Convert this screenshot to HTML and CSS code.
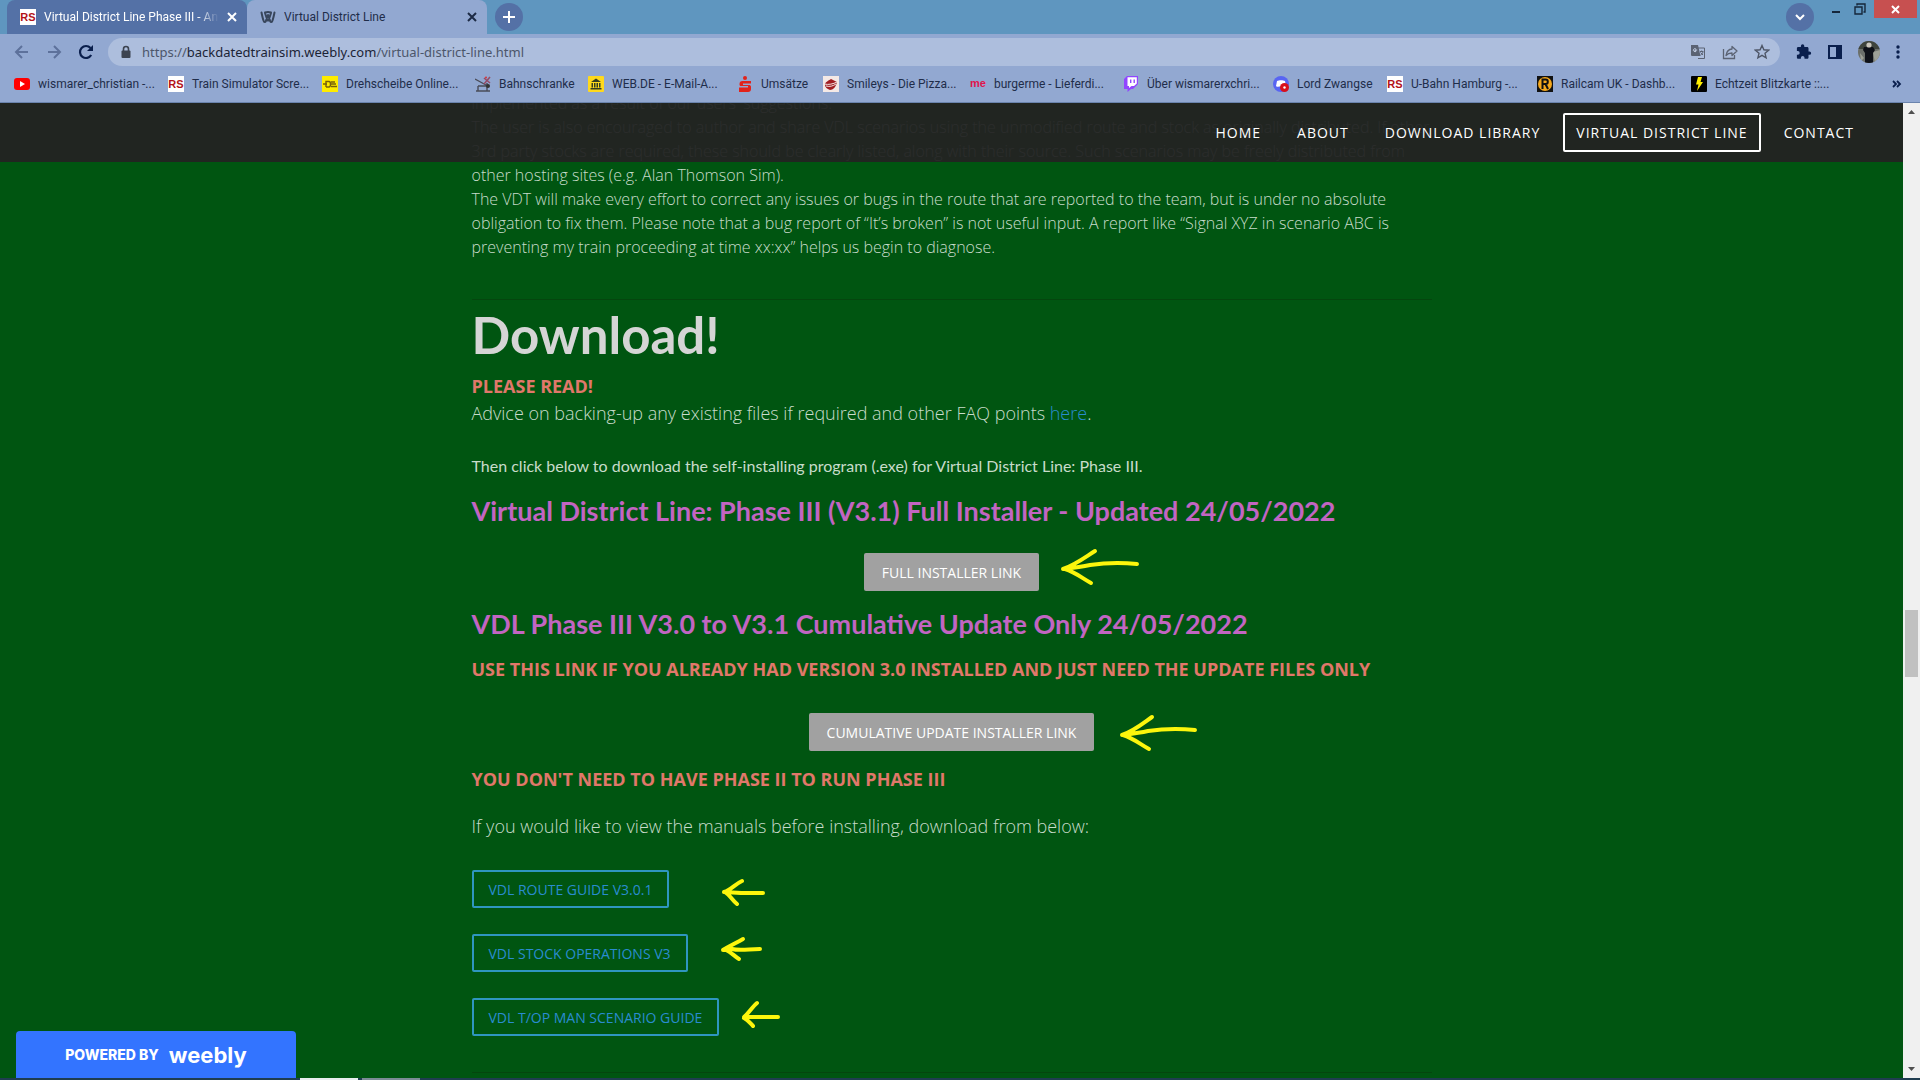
FILE: index.html
```html
<!DOCTYPE html>
<html lang="en">
<head>
<meta charset="utf-8">
<title>Virtual District Line</title>
<link rel="stylesheet" href="styles.css">
</head>
<body>
<div class="browser">
  <header class="chrome">
    <div class="tabs">
      <div class="tab tab-dark">
        <svg class="icon16" viewBox="0 0 16 16"><rect width="16" height="16" fill="#fff"/><text x="8" y="12" class="rs">RS</text></svg>
        <span class="tab-title fade">Virtual District Line Phase III - An</span>
        <button class="plain" aria-label="Close tab"><svg width="10" height="10" viewBox="0 0 10 10"><path d="M1 1l8 8M9 1l-8 8" stroke="#fff" stroke-width="2"/></svg></button>
      </div>
      <div class="tab tab-light">
        <svg class="icon16" viewBox="0 0 16 16"><path d="M1.500 3.500c.6 3 1.300 6.500 2.300 8.700.5 1 1.500 1 2 0L8 6l2.200 6.200c.5 1 1.500 1 2 0 1-2.200 1.700-5.700 2.300-8.700M5 4l2.500 7.500M11 4L8.500 11.500M5 3.500c2-.8 4-.8 6 0" fill="none" stroke="#38465c" stroke-width="2" stroke-linecap="round" stroke-linejoin="round"/></svg>
        <span class="tab-title">Virtual District Line</span>
        <button class="plain" aria-label="Close tab"><svg width="10" height="10" viewBox="0 0 10 10"><path d="M1 1l8 8M9 1l-8 8" stroke="#1d2b45" stroke-width="2"/></svg></button>
      </div>
      <button class="round new-tab" aria-label="New tab"><svg width="14" height="14" viewBox="0 0 14 14"><path d="M7 1v12M1 7h12" stroke="#fff" stroke-width="2"/></svg></button>
      <div class="window-tools">
        <button class="round" aria-label="Search tabs"><svg width="12" height="12" viewBox="0 0 12 12"><path d="M2 4l4 4 4-4" fill="none" stroke="#fff" stroke-width="2"/></svg></button>
        <button class="win" aria-label="Minimize"><svg width="10" height="10" viewBox="0 0 10 10"><path d="M1 8h8" stroke="#15263a" stroke-width="2"/></svg></button>
        <button class="win" aria-label="Restore"><svg width="12" height="12" viewBox="0 0 12 12"><path d="M3 2.500V1h8v8H9.500M1 4h7v7H1z" fill="none" stroke="#15263a" stroke-width="1.400"/></svg></button>
        <button class="win win-close" aria-label="Close"><svg width="9" height="9" viewBox="0 0 9 9"><path d="M1 1l7 7M8 1L1 8" stroke="#fff" stroke-width="2"/></svg></button>
      </div>
    </div>
    <div class="toolbar">
      <button class="plain" aria-label="Back"><svg width="16" height="16" viewBox="0 0 16 16"><path d="M14 8H3M8 2L2 8l6 6" fill="none" stroke="#5d719b" stroke-width="2"/></svg></button>
      <button class="plain" aria-label="Forward"><svg width="16" height="16" viewBox="0 0 16 16"><path d="M2 8h11M8 2l6 6-6 6" fill="none" stroke="#5d719b" stroke-width="2"/></svg></button>
      <button class="plain" aria-label="Reload"><svg width="16" height="16" viewBox="0 0 16 16"><path d="M13.200 11A6 6 0 1 1 12.500 4" fill="none" stroke="#0a1f4d" stroke-width="2.200"/><path d="M15 1v6H9z" fill="#0a1f4d"/></svg></button>
      <div class="omnibox">
        <svg width="12" height="14" viewBox="0 0 12 14"><path d="M3.500 6V4a2.500 2.500 0 0 1 5 0v2" fill="none" stroke="#3c4350" stroke-width="1.600"/><rect x="1.500" y="5.500" width="9" height="7.500" rx="1" fill="#3c4350"/></svg>
        <span class="url">https://<b>backdatedtrainsim.weebly.com</b>/virtual-district-line.html</span>
        <svg width="16" height="16" viewBox="0 0 16 16"><path d="M7.500 4H14.500v10.500H8" fill="none" stroke="#5b6373"/><path d="M1 1h7l2.500 11H2a1 1 0 0 1-1-1z" fill="#5b6373"/><path d="M7.200 6H5v1h1.200A1.500 1.500 0 1 1 5.900 5" fill="none" stroke="#c5d0e6"/><path d="M10 7.500h3.500M11.700 6.500v1M13 8c-.5 1.500-1.500 2.500-2.500 3M10.500 8.500L13 11" fill="none" stroke="#5b6373"/></svg>
        <svg width="16" height="16" viewBox="0 0 16 16"><path d="M1.500 5v9.500h11V11" fill="none" stroke="#5b6373" stroke-width="1.300"/><path d="M10 2.500L15 7l-5 4.500V9C7.500 9 5.500 9.700 4 11.500 4.500 8 6.500 5.300 10 5z" fill="none" stroke="#5b6373" stroke-width="1.300" stroke-linejoin="round"/></svg>
        <svg width="16" height="16" viewBox="0 0 16 16"><path d="M8 1.500l1.900 4.300 4.700.4-3.600 3.100 1.100 4.600L8 11.400l-4.100 2.500L5 9.300 1.400 6.200l4.700-.4z" fill="none" stroke="#4e5667" stroke-width="1.400"/></svg>
      </div>
      <div class="tools">
        <button class="plain" aria-label="Extensions"><svg width="16" height="16" viewBox="0 0 16 16"><path d="M13.500 7.500h-1V4.400c0-.7-.6-1.300-1.300-1.300H8.300V2a1.700 1.700 0 0 0-3.400 0v1.100H2.200c-.7 0-1.300.6-1.300 1.300v2.700h1a1.800 1.800 0 0 1 0 3.600h-1v2.800c0 .7.600 1.300 1.300 1.300h2.700v-1a1.800 1.800 0 0 1 3.600 0v1h2.700c.7 0 1.300-.6 1.300-1.300v-2.700h1a1.650 1.650 0 0 0 0-3.300z" fill="#0a1f4d"/></svg></button>
        <button class="plain" aria-label="Side panel"><svg width="14" height="14" viewBox="0 0 14 14"><rect x="1" y="1" width="12" height="12" fill="none" stroke="#0a1f4d" stroke-width="2"/><path d="M8 1h5v12H8z" fill="#0a1f4d"/></svg></button>
        <button class="plain" aria-label="Profile"><svg width="22" height="22" viewBox="0 0 22 22"><clipPath id="c"><circle cx="11" cy="11" r="11"/></clipPath><g clip-path="url(#c)"><path fill="#6c706b" d="M0 0h22v22H0z"/><path fill="#3e443d" d="M0 0h22v8H0z"/><path fill="#9da097" d="M15 11l7-2v9l-5 4zM2 12l4 5-3 3z"/><path fill="#0e1118" d="M6 6h9l2 3-2 3v10H7V12L5 9z"/><circle cx="11" cy="4" r="2.600" fill="#c9c5bb"/></g></svg></button>
        <button class="plain" aria-label="Menu"><svg width="4" height="14" viewBox="0 0 4 14"><g fill="#0a1f4d"><circle cx="2" cy="2" r="1.700"/><circle cx="2" cy="7" r="1.700"/><circle cx="2" cy="12" r="1.700"/></g></svg></button>
      </div>
    </div>
    <nav class="bookmarks" aria-label="Bookmarks">
      <a href="#"><svg class="icon16" viewBox="0 0 16 16"><rect y="2" width="16" height="12" rx="3" fill="#f00"/><path d="M6 5l5 3-5 3z" fill="#fff"/></svg>wismarer_christian -...</a>
      <a href="#"><svg class="icon16" viewBox="0 0 16 16"><rect width="16" height="16" fill="#fff"/><text x="8" y="12" class="rs">RS</text></svg>Train Simulator Scre...</a>
      <a href="#"><svg class="icon16" viewBox="0 0 16 16"><rect width="16" height="16" fill="#ffec00"/><path d="M1 8h4M4 11V5.500h3c2 0 2 5.500 0 5.500H4M9 6h4M9 8h5M9 10.500h6" stroke="#77600b" fill="none" stroke-width="1.400"/></svg>Drehscheibe Online...</a>
      <a href="#"><svg class="icon16" viewBox="0 0 16 16"><path d="M0 3l11 6M3 10h9M1 15h14M3 10v5M12 7v8" stroke="#4a4c58" fill="none" stroke-width="1.400"/><path d="M9 2l6 5M15 1L9 8" stroke="#934c68" stroke-width="1.600"/><circle cx="11" cy="1.500" r="1" fill="#d33"/><circle cx="13" cy="10" r="2" fill="#333"/></svg>Bahnschranke</a>
      <a href="#"><svg class="icon16" viewBox="0 0 16 16"><rect width="16" height="16" rx="1" fill="#ffd91c"/><path d="M8 2.500L13 6H3zM2.500 12h11v1.500h-11zM3.500 7h1.500v4.500H3.500zM6 7h1.500v4.500H6zM8.500 7H10v4.500H8.500zM11 7h1.500v4.500H11z" fill="#333c22"/></svg>WEB.DE - E-Mail-A...</a>
      <a href="#"><svg class="icon16" viewBox="0 0 16 16"><circle cx="8" cy="2" r="2" fill="#e2231a"/><path d="M14 5H5.500a3 3 0 0 0-3 3v.5c0 1 .7 1.500 1.500 1.500h7v1.500H2V16h9a3 3 0 0 0 3-3v-2c0-1.500-1-2-2-2H6V7.500h8z" fill="#e2231a"/></svg>Umsätze</a>
      <a href="#"><svg class="icon16" viewBox="0 0 16 16"><rect width="16" height="16" fill="#f4e9e6"/><path d="M2 9c0-3 3-4 6-6 2 1 4 2 6 3-1 5-4 8-7 8-3-1-5-3-5-5z" fill="#a11d22"/><path d="M1 8c5 1 9 0 13-2M3 10c4 1 7 0 10-2" stroke="#f4e9e6" fill="none"/></svg>Smileys - Die Pizza...</a>
      <a href="#"><svg class="icon16" viewBox="0 0 16 16"><text x="8" y="11" class="me">me</text></svg>burgerme - Lieferdi...</a>
      <a href="#"><svg class="icon16" viewBox="0 0 16 16"><path d="M4 0L1 3v10h3.500v3L8 13h2l5-5V0z" fill="#9146ff"/><path d="M4.500 1.200h9.300v6.300L11 10H8.500L6 12v-2H4.500z" fill="#fff"/><path d="M7 3.500h1.400v3.500H7zM10.500 3.500h1.400v3.500h-1.400z" fill="#9146ff"/></svg>Über wismarerxchri...</a>
      <a href="#"><svg class="icon16" viewBox="0 0 16 16"><circle cx="8" cy="8" r="8" fill="#5865f2"/><path d="M4 5c2-1 6-1 8 0l1 5c-1 1-2 1-3 .500H6C5 11 4 11 3 10z" fill="#fff"/><circle cx="11.500" cy="11.500" r="4.500" fill="#d8101c"/><circle cx="11.500" cy="11.500" r="1.200" fill="#fff"/></svg>Lord Zwangse</a>
      <a href="#"><svg class="icon16" viewBox="0 0 16 16"><rect width="16" height="16" fill="#fff"/><text x="8" y="12" class="rs">RS</text></svg>U-Bahn Hamburg -...</a>
      <a href="#"><svg class="icon16" viewBox="0 0 16 16"><rect width="16" height="16" fill="#111"/><circle cx="8" cy="8" r="7" fill="#f5a81c"/><path d="M5.500 13V3.500h3.200c2.800 0 2.800 4.500 0 4.500H5.500M8.500 8l2.500 5" fill="none" stroke="#111" stroke-width="2"/></svg>Railcam UK - Dashb...</a>
      <a href="#"><svg class="icon16" viewBox="0 0 16 16"><rect width="16" height="16" rx="1" fill="#000"/><path d="M7 1h4L9.500 6H12l-6 9 1.500-6.500H5z" fill="#ffee00"/></svg>Echtzeit Blitzkarte ::...</a>
      <button class="plain more" aria-label="More bookmarks"><svg width="10" height="8" viewBox="0 0 10 8"><path d="M1 1l3 3-3 3M5 1l3 3-3 3" fill="none" stroke="#0a1f4d" stroke-width="1.800"/></svg></button>
    </nav>
  </header>

  <div class="view">
    <div class="page">
      <nav class="site-nav" aria-label="Site">
        <a href="#">HOME</a>
        <a href="#">ABOUT</a>
        <a href="#">DOWNLOAD LIBRARY</a>
        <a href="#" class="current">VIRTUAL DISTRICT LINE</a>
        <a href="#">CONTACT</a>
      </nav>
      <main class="content">
        <p class="terms">implemented as a result of our users' suggestions.<br>
          The user is also encouraged to author and share VDL scenarios using the unmodified route and stock as originally distributed. If other<br>
          3rd party stocks are required, these should be clearly listed, along with their source. Such scenarios may be freely distributed from<br>
          other hosting sites (e.g. Alan Thomson Sim).<br>
          The VDT will make every effort to correct any issues or bugs in the route that are reported to the team, but is under no absolute<br>
          obligation to fix them. Please note that a bug report of “It’s broken” is not useful input. A report like “Signal XYZ in scenario ABC is<br>
          preventing my train proceeding at time xx:xx” helps us begin to diagnose.</p>
        <hr>
        <h1>Download!</h1>
        <p class="lead"><strong>PLEASE READ!</strong><br>Advice on backing-up any existing files if required and other FAQ points <a href="#">here</a>.</p>
        <p class="note">Then click below to download the self-installing program (.exe) for Virtual District Line: Phase III.</p>
        <h2>Virtual District Line: Phase III (V3.1) Full Installer - Updated 24/05/2022</h2>
        <div class="center full"><button class="solid">FULL INSTALLER LINK</button></div>
        <h2>VDL Phase III V3.0 to V3.1 Cumulative Update Only 24/05/2022</h2>
        <p class="lead after"><strong>USE THIS LINK IF YOU ALREADY HAD VERSION 3.0 INSTALLED AND JUST NEED THE UPDATE FILES ONLY</strong></p>
        <div class="center update"><button class="solid">CUMULATIVE UPDATE INSTALLER LINK</button></div>
        <p class="lead after"><strong>YOU DON'T NEED TO HAVE PHASE II TO RUN PHASE III</strong></p>
        <p class="lead manuals">If you would like to view the manuals before installing, download from below:</p>
        <div class="guides">
          <button class="outline">VDL ROUTE GUIDE V3.0.1</button>
          <button class="outline">VDL STOCK OPERATIONS V3</button>
          <button class="outline">VDL T/OP MAN SCENARIO GUIDE</button>
        </div>
        <hr>
        <svg class="arrows" width="960" height="987" viewBox="472 91 960 987">
          <path d="M1137 564c-18-2-34-1-47 1-9 2-18 3-27 4 12-4 21-11 32-18M1065 569c10 3 17 9 26 14"/>
          <path d="M1195 730c-18-2-34-1-47 1-9 2-18 3-26 4 12-4 20-11 30-18M1123 735c10 3 17 9 26 14"/>
          <path d="M763 893h-22c-6-1-11 0-17-1 7-2 11-8 18-11M725 892c5 3 7 8 12 12"/>
          <path d="M760 949c-11 0-20 2-28 0-3 0-6 1-9 1 6-4 13-7 20-11M726 950c5 2 8 6 13 9"/>
          <path d="M778 1017h-34c5-4 8-10 13-14M744 1018c4 2 6 5 9 8"/>
        </svg>
      </main>
      <a class="badge" href="#">POWERED BY <span>weebly</span></a>
    </div>
    <div class="scrollbar">
      <svg width="17" height="17" viewBox="0 0 17 17"><path d="M5 11l3.500-4 3.500 4z" fill="#4f4f4f"/></svg>
      <div class="thumb"></div>
      <svg width="17" height="17" viewBox="0 0 17 17"><path d="M5 6l3.500 4L12 6z" fill="#4f4f4f"/></svg>
    </div>
  </div>
  <footer class="taskbar"><i></i><i class="dim"></i></footer>
</div>
</body>
</html>
```
FILE: styles.css
```css
* { box-sizing: border-box; }
body { margin: 0; background: #005511; font-family: "Open Sans", "Noto Sans", sans-serif; }
a { color: inherit; text-decoration: none; }
button { font: inherit; cursor: pointer; }
svg { flex: none; display: block; }

.browser { height: 100vh; display: flex; flex-direction: column; overflow: hidden; }
.chrome { flex: none; background: #92a8d1; font-size: 12px; font-family: Roboto, "Open Sans", sans-serif; color: #1f2d4a; border-bottom: 1px solid #6b84ad; }
.icon16 { width: 16px; height: 16px; }
.rs { font: bold 11px "Liberation Sans", sans-serif; fill: #b31217; text-anchor: middle; }
.me { font: bold 11px "Liberation Sans", sans-serif; fill: #e0144c; text-anchor: middle; }
.plain { border: 0; background: none; padding: 0; display: flex; align-items: center; justify-content: center; }

.tabs { display: flex; height: 34px; padding-left: 7px; background: #5f96bf; }
.tab { display: flex; align-items: center; gap: 8px; width: 240px; padding: 0 10px 0 13px; border-radius: 8px 8px 0 0; }
.tab-dark { background: #5471a6; color: #fff; }
.tab-light { background: #92a8d1; }
.tab-title { flex: 1; overflow: hidden; white-space: nowrap; }
.fade { mask-image: linear-gradient(90deg, #000 88%, transparent); }
.round { width: 28px; height: 28px; border: 0; border-radius: 50%; padding: 0; background: #5471a6; display: flex; align-items: center; justify-content: center; }
.new-tab { margin: 3px 0 0 8px; }
.window-tools { margin-left: auto; display: flex; align-items: flex-start; }
.window-tools .round { margin: 3px 10px 0 0; }
.win { width: 24px; height: 18px; border: 0; padding: 0; background: none; display: flex; align-items: center; justify-content: center; }
.win-close { width: 43px; margin: 0 3px 0 2px; background: #c75050; }

.toolbar { display: flex; align-items: center; height: 35px; padding: 0 20px 0 14px; gap: 16px; }
.omnibox { flex: 1; height: 28px; border-radius: 14px; background: #adbedd; display: flex; align-items: center; gap: 16px; padding: 0 10px 0 12px; margin-left: -2px; }
.url { flex: 1; font-family: "Noto Sans", "Open Sans", sans-serif; font-size: 13px; margin-left: -14px; padding-left: 8px; color: #4c566b; }
.url b { font-weight: 400; color: #1b2436; }
.tools { display: flex; align-items: center; gap: 16px; }

.bookmarks { display: grid; grid-template-columns: 154px 154px 153px 113px 149px 86px 147px 153px 150px 114px 150px 154px 1fr auto; align-items: center; height: 33px; padding: 0 18px 3px 14px; }
.bookmarks a { display: flex; align-items: center; gap: 8px; white-space: nowrap; }

.view { flex: 1; min-height: 0; display: flex; }
.page { position: relative; flex: 1; overflow: hidden; background: #005511; }
.site-nav { position: absolute; z-index: 2; top: 0; left: 0; right: 0; height: 59px; padding-right: 36px; background: rgba(35, 35, 35, .95); color: #fff; display: flex; align-items: center; justify-content: flex-end; font-size: 14px; letter-spacing: 1px; }
.site-nav a { border: 2px solid transparent; border-radius: 2px; padding: 0 11px; line-height: 35px; white-space: nowrap; }
.site-nav .current { border-color: #fff; margin: 0 10px; }
.site-nav a:nth-child(-n+3) { margin-left: 10px; }

.content { position: relative; max-width: 960px; margin: -12px auto 0; color: #c8dccb; font-weight: 300; }
.content p, .content h1, .content h2 { margin: 0; white-space: nowrap; }
.content hr { border: 0; border-top: 1px solid #04460e; margin: 0; }
.content .terms { font-size: 16px; line-height: 24px; padding-bottom: 40px; }
.content h1 { font: bold 51px/58px "Lato", sans-serif; color: #d5d5d5; padding: 6px 0 9px; }
.content .lead { font-size: 18px; line-height: 27px; }
.lead strong { color: #e0786a; font-weight: 700; }
.lead a { color: #2a8cd0; }
.content .after { margin-top: 15px; }
.content .manuals { margin-top: 20px; }
.content .note { font: 400 16px/24px "Lato", sans-serif; margin-top: 27px; }
.content h2 { font: bold 27px/34px "Lato", sans-serif; color: #c265c2; margin-top: 16px; }
.center { display: flex; justify-content: center; }
.full { margin-top: 25px; }
.update { margin-top: 30px; }
.solid, .outline { height: 38px; border-radius: 2px; font-size: 14px; padding: 0 18px; white-space: nowrap; }
.solid { border: 0; background: #a1a1a1; color: #fff; font-weight: 500; }
.outline { border: 2px solid #2f96c0; padding: 0 15px; background: none; color: #2a8cd0; font-weight: 400; }
.guides { display: flex; flex-direction: column; align-items: flex-start; gap: 26px; margin: 30px 0 36px; }
.arrows { position: absolute; top: 0; left: 0; pointer-events: none; fill: none; stroke: #fcf60c; stroke-width: 4; stroke-linecap: round; stroke-linejoin: round; }

.badge { position: absolute; left: 16px; bottom: 0; width: 280px; height: 47px; border-radius: 4px 4px 0 0; background: #3374ff; color: #fff; display: flex; align-items: center; justify-content: center; gap: 10px; font: 800 14px "Inter", sans-serif; }
.badge span { font-size: 22px; font-weight: 700; }

.scrollbar { flex: none; width: 17px; background: #f0f0f0; display: flex; flex-direction: column; justify-content: space-between; align-items: center; }
.thumb { width: 13px; height: 67px; background: #c1c1c1; margin-top: 105px; }
.taskbar { flex: none; height: 2px; background: #1f3d50; display: flex; gap: 4px; padding-left: 300px; }
.taskbar i { width: 58px; background: #e8eef0; }
.taskbar .dim { background: #7c8c96; }
```
